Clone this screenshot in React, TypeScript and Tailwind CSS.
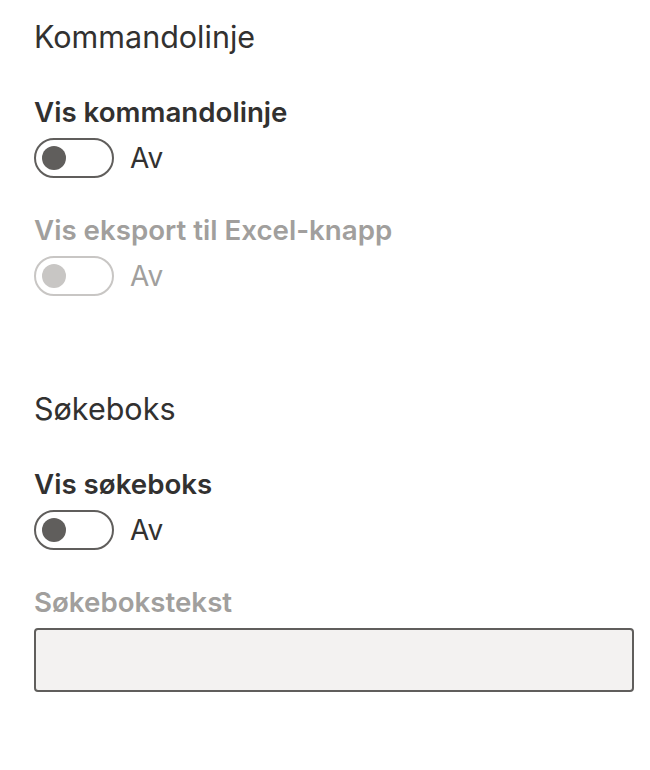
import React from "react";

const font = { fontFamily: "Inter, 'Noto Sans', sans-serif" };

function Toggle({ disabled }: { disabled?: boolean }) {
  return (
    <div className="flex items-center h-[40px] mt-[6px]">
      <div
        className={
          "w-[80px] h-[40px] rounded-full border-2 flex items-center pl-[6px] " +
          (disabled ? "border-[#c8c6c4]" : "border-[#605e5c]")
        }
      >
        <div
          className={
            "w-[24px] h-[24px] rounded-full " +
            (disabled ? "bg-[#c8c6c4]" : "bg-[#605e5c]")
          }
        />
      </div>
      <span
        className={
          "ml-[16px] text-[28px] leading-[40px] " +
          (disabled ? "text-[#a19f9d]" : "text-[#323130]")
        }
      >
        Av
      </span>
    </div>
  );
}

export default function App() {
  return (
    <div className="w-[650px] h-[770px] bg-white px-[34px]" style={font}>
      <div className="pt-[17px] flex flex-col">
        <div className="text-[30.5px] leading-[40px] text-[#323130]">Kommandolinje</div>
        <div className="mt-[35px] text-[27.7px] leading-[40px] font-semibold text-[#323130]">
          Vis kommandolinje
        </div>
        <Toggle />
        <div className="mt-[32px] text-[27.7px] leading-[40px] font-semibold text-[#a19f9d]">
          Vis eksport til Excel-knapp
        </div>
        <Toggle disabled />
        <div className="mt-[93px] text-[30.5px] leading-[40px] text-[#323130]">Søkeboks</div>
        <div className="mt-[35px] text-[27.7px] leading-[40px] font-semibold text-[#323130]">
          Vis søkeboks
        </div>
        <Toggle />
        <div className="mt-[32px] text-[27.7px] leading-[40px] font-semibold text-[#a19f9d]">
          Søkebokstekst
        </div>
        <div className="mt-[6px] w-[600px] h-[64px] border-2 border-[#605e5c] rounded-[4px] bg-[#f3f2f1]" />
      </div>
    </div>
  );
}
